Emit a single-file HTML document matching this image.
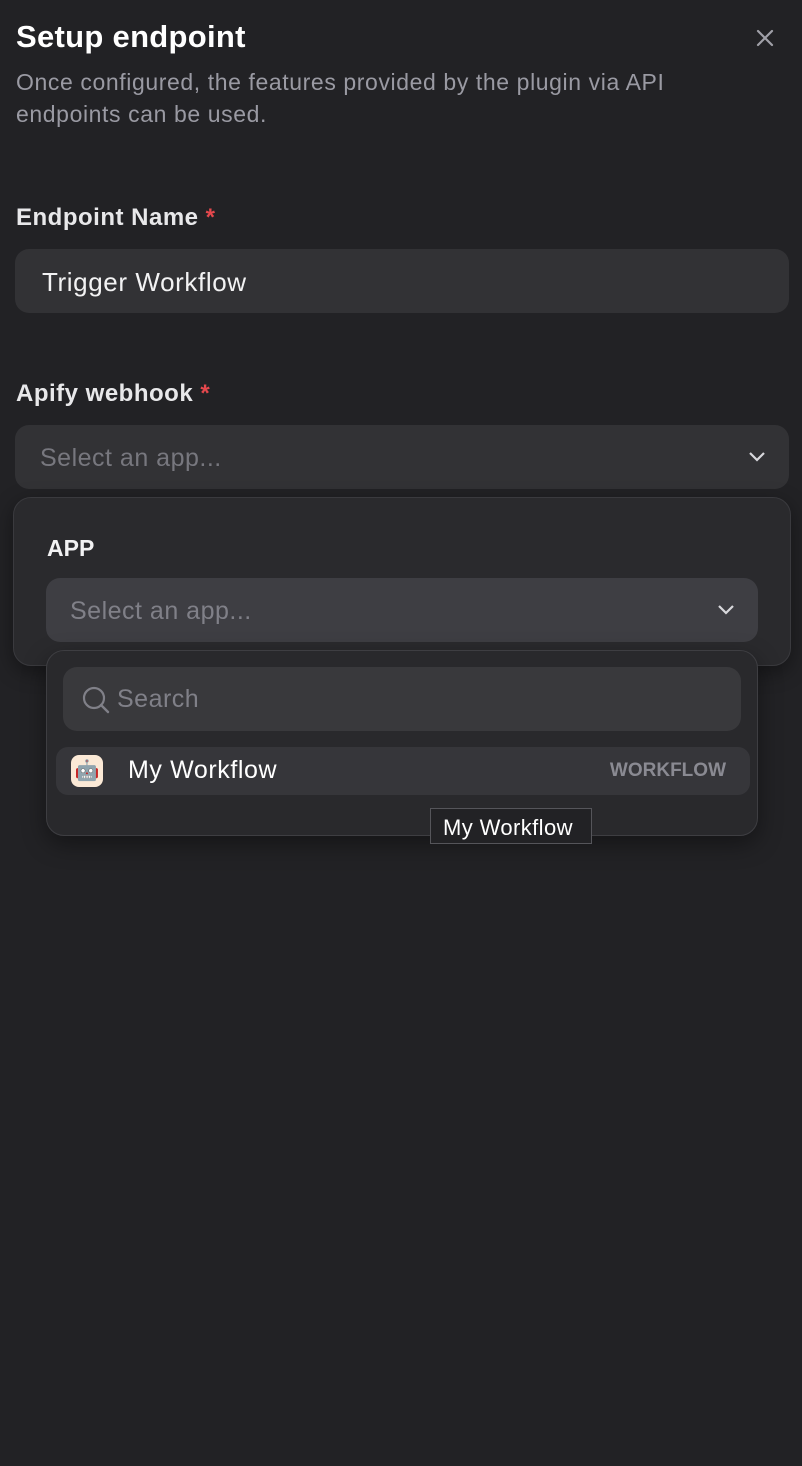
<!DOCTYPE html>
<html><head><style>
*{box-sizing:border-box;margin:0;padding:0}
body{width:802px;height:1466px;background:#222225;font-family:"Liberation Sans",sans-serif;position:relative;overflow:hidden;color:#f2f2f3}
.a{position:absolute}
.t{left:16px;top:19px;font-size:31px;font-weight:bold;color:#fff;letter-spacing:0.3px}
.d{left:16px;top:66px;font-size:23px;line-height:32px;color:#9a9aa3;width:710px;letter-spacing:0.6px}
.lbl{font-size:24px;font-weight:bold;color:#e8e8ea;left:16px;letter-spacing:0.5px}
.lbl span{color:#e5484d}
.inp{left:15px;width:774px;height:64px;border-radius:14px;background:#323235}
</style></head><body>
<div class="a t">Setup endpoint</div>
<svg class="a" style="left:754px;top:27px" width="22" height="22" viewBox="0 0 22 22"><path d="M4 4L18 18M18 4L4 18" stroke="#a0a0a8" stroke-width="2.2" stroke-linecap="round"/></svg>
<div class="a d">Once configured, the features provided by the plugin via API endpoints can be used.</div>
<div class="a lbl" style="top:204px">Endpoint Name <span>*</span></div>
<div class="a inp" style="top:249px"><div class="a" style="left:27px;top:18px;font-size:26px;letter-spacing:0.6px;color:#f2f2f3">Trigger Workflow</div></div>
<div class="a lbl" style="top:380px">Apify webhook <span>*</span></div>
<div class="a inp" style="top:425px"><div class="a" style="left:25px;top:19px;font-size:25px;letter-spacing:0.5px;color:#77777e">Select an app...</div>
<svg class="a" style="left:732px;top:24px" width="20" height="16" viewBox="0 0 20 16"><path d="M3 4L10 11L17 4" fill="none" stroke="#d8d8dc" stroke-width="2.2"/></svg></div>
<div class="a" style="left:13px;top:497px;width:778px;height:169px;border-radius:18px;background:#2a2a2d;border:1px solid #3a3a3e;box-shadow:0 6px 20px rgba(0,0,0,.4)">
<div class="a" style="left:33px;top:37px;font-size:23px;font-weight:bold;color:#f2f2f3">APP</div>
<div class="a" style="left:32px;top:80px;width:712px;height:64px;border-radius:14px;background:#3e3e43"><div class="a" style="left:24px;top:19px;font-size:25px;letter-spacing:0.5px;color:#808088">Select an app...</div>
<svg class="a" style="left:670px;top:24px" width="20" height="16" viewBox="0 0 20 16"><path d="M3 4L10 11L17 4" fill="none" stroke="#d8d8dc" stroke-width="2.2"/></svg></div>
</div>
<div class="a" style="left:46px;top:650px;width:712px;height:186px;border-radius:18px;background:#29292c;border:1px solid #3e3e42;box-shadow:0 8px 24px rgba(0,0,0,.4)">
<div class="a" style="left:16px;top:16px;width:678px;height:64px;border-radius:14px;background:#39393c">
<svg class="a" style="left:18px;top:18px" width="30" height="30" viewBox="0 0 30 30"><circle cx="13" cy="13" r="10" fill="none" stroke="#808088" stroke-width="2.2"/><path d="M20 20L27 27" stroke="#808088" stroke-width="2.4" stroke-linecap="round"/></svg>
<div class="a" style="left:54px;top:18px;font-size:25px;letter-spacing:0.5px;color:#808088">Search</div></div>
<div class="a" style="left:9px;top:96px;width:694px;height:48px;border-radius:12px;background:#36363a">
<div class="a" style="left:15px;top:8px;width:32px;height:32px;border-radius:8px;background:#fbe9d6;font-size:20px;text-align:center;line-height:32px">🤖</div>
<div class="a" style="left:72px;top:9px;font-size:25px;letter-spacing:0.6px;color:#fff">My Workflow</div>
<div class="a" style="right:24px;top:13px;font-size:19px;font-weight:bold;color:#8a8a92">WORKFLOW</div></div>
</div>
<div class="a" style="left:430px;top:808px;width:162px;height:36px;background:#222225;border:1px solid #55555a;font-size:22px;color:#fff;padding:6px 0 0 12px;letter-spacing:0.4px">My Workflow</div>
</body></html>
